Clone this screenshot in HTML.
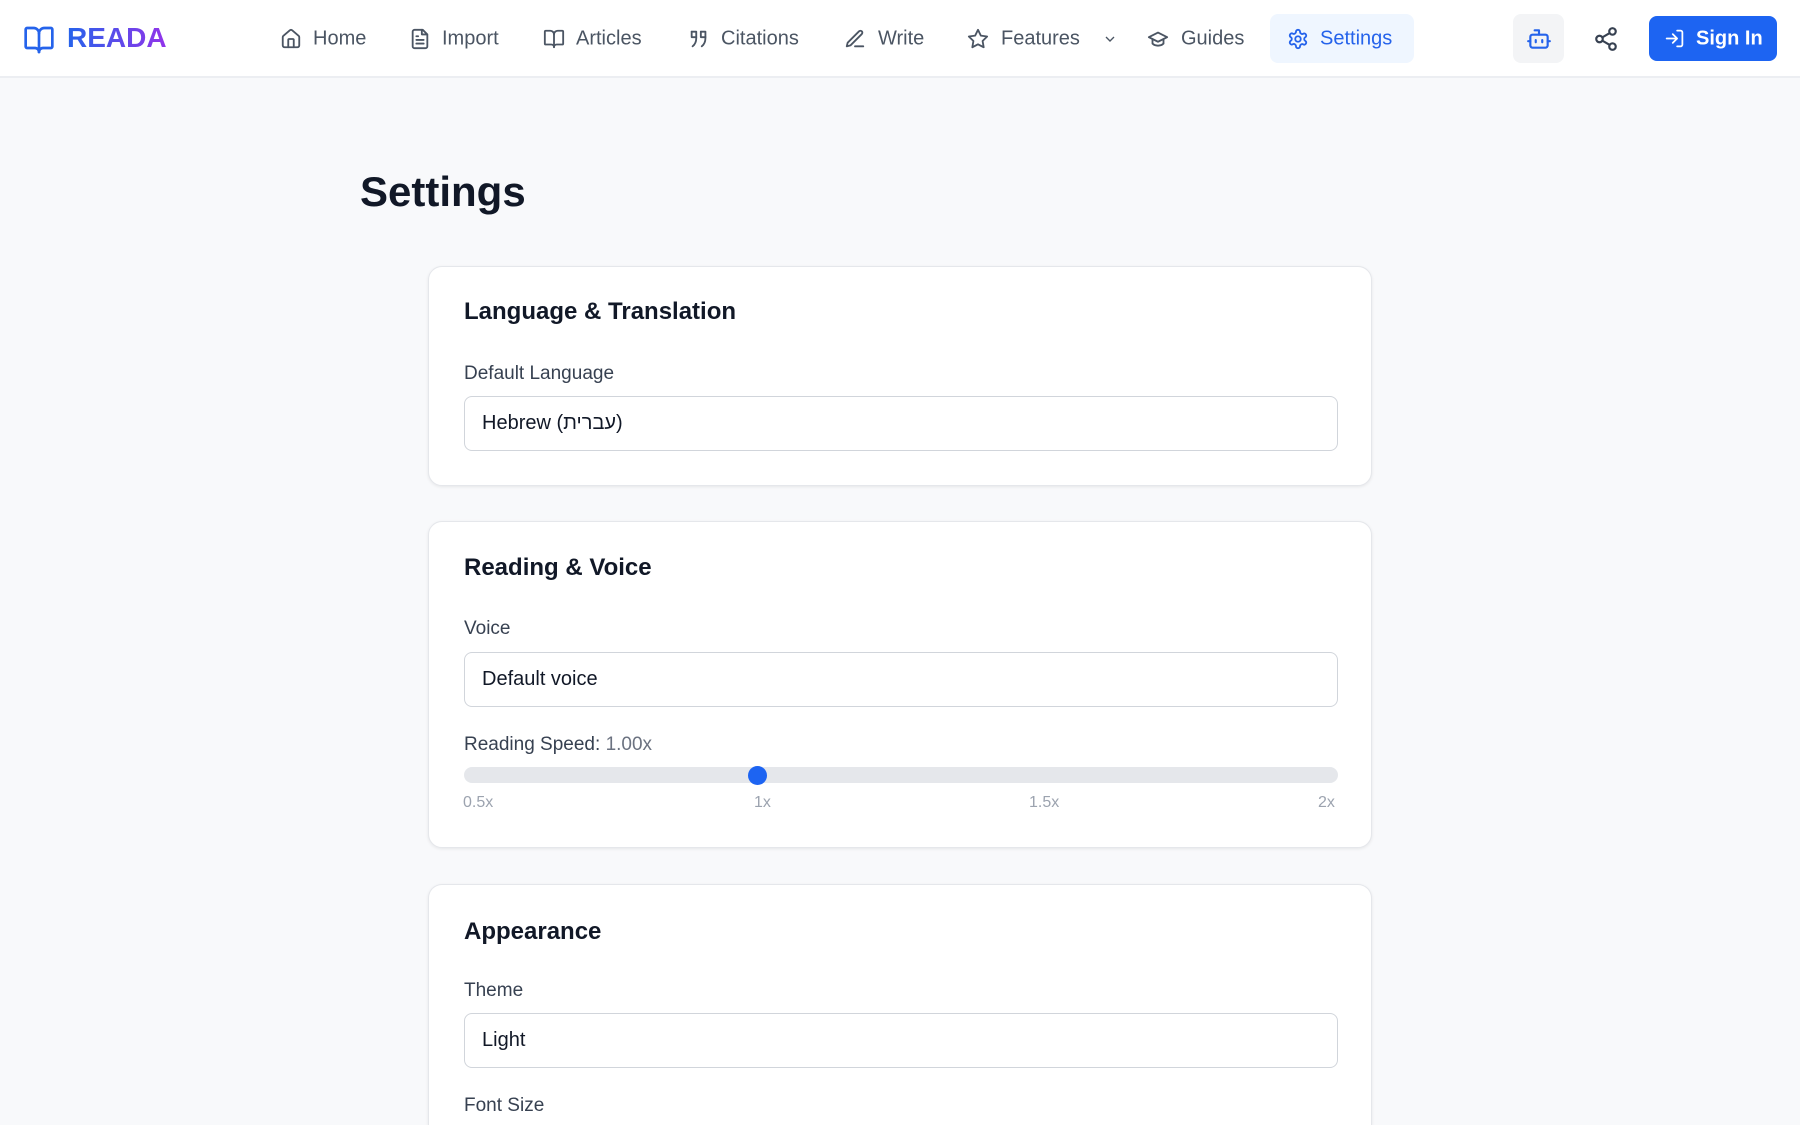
<!DOCTYPE html>
<html><head><meta charset="utf-8">
<style>
*{box-sizing:border-box;margin:0;padding:0}
html{width:1800px;height:1125px;overflow:hidden}
body{width:1800px;height:1125px;overflow:hidden;background:#f8f9fb;font-family:"Liberation Sans","Noto Sans CJK SC",sans-serif;color:#111827;position:relative}
.nav{position:absolute;left:0;top:0;width:1800px;height:78px;background:#fff;border-bottom:2px solid #eceef2}
.a{position:absolute}
.ni{position:absolute;top:39px;transform:translateY(-50%);font-size:20px;color:#4b5563;white-space:nowrap}
svg{position:absolute}
.card{position:absolute;left:428px;width:944px;background:#fff;border:1px solid #e5e7eb;border-radius:14px;box-shadow:0 1px 3px rgba(0,0,0,.08)}
.ct{position:absolute;left:35px;font-size:24px;font-weight:bold;color:#111827}
.lb{position:absolute;left:35px;font-size:19px;color:#374151}
.inp{position:absolute;left:35px;width:874px;height:55px;border:1.5px solid #d1d5db;border-radius:8px;font-size:20px;color:#111827;padding-left:17px;line-height:52px}
.tk{position:absolute;font-size:16px;color:#9ca3af;top:794px}
</style></head><body>
<div class="nav">
<svg style="left:23px;top:24px" width="32" height="32" viewBox="0 0 24 24" fill="none" stroke="#2563eb" stroke-width="2" stroke-linecap="round" stroke-linejoin="round"><path d="M12 7v14"/><path d="M3 18a1 1 0 0 1-1-1V4a1 1 0 0 1 1-1h5a4 4 0 0 1 4 4 4 4 0 0 1 4-4h5a1 1 0 0 1 1 1v13a1 1 0 0 1-1 1h-6a3 3 0 0 0-3 3 3 3 0 0 0-3-3z"/></svg>
<div class="a" style="left:67px;top:22px;font-size:28px;font-weight:bold;background:linear-gradient(90deg,#2563eb,#9333ea);-webkit-background-clip:text;color:transparent">READA</div>

<svg style="left:280px;top:28px" width="22" height="22" viewBox="0 0 24 24" fill="none" stroke="#4b5563" stroke-width="2" stroke-linecap="round" stroke-linejoin="round"><path d="M15 21v-8a1 1 0 0 0-1-1h-4a1 1 0 0 0-1 1v8"/><path d="M3 10a2 2 0 0 1 .7-1.5l7-6a2 2 0 0 1 2.6 0l7 6A2 2 0 0 1 21 10v9a2 2 0 0 1-2 2H5a2 2 0 0 1-2-2z"/></svg>
<div class="ni" style="left:313px">Home</div>
<svg style="left:409px;top:28px" width="22" height="22" viewBox="0 0 24 24" fill="none" stroke="#4b5563" stroke-width="2" stroke-linecap="round" stroke-linejoin="round"><path d="M15 2H6a2 2 0 0 0-2 2v16a2 2 0 0 0 2 2h12a2 2 0 0 0 2-2V7Z"/><path d="M14 2v5h5M16 13H8M16 17H8M10 9H8"/></svg>
<div class="ni" style="left:442px">Import</div>
<svg style="left:543px;top:28px" width="22" height="22" viewBox="0 0 24 24" fill="none" stroke="#4b5563" stroke-width="2" stroke-linecap="round" stroke-linejoin="round"><path d="M12 7v14"/><path d="M3 18a1 1 0 0 1-1-1V4a1 1 0 0 1 1-1h5a4 4 0 0 1 4 4 4 4 0 0 1 4-4h5a1 1 0 0 1 1 1v13a1 1 0 0 1-1 1h-6a3 3 0 0 0-3 3 3 3 0 0 0-3-3z"/></svg>
<div class="ni" style="left:576px">Articles</div>
<svg style="left:688px;top:28px" width="22" height="22" viewBox="0 0 24 24" fill="none" stroke="#4b5563" stroke-width="2" stroke-linecap="round" stroke-linejoin="round"><path d="M4 4h5v7c0 4-1.5 7-4 9"/><path d="M4 4v6h5"/><path d="M14 4h5v7c0 4-1.5 7-4 9"/><path d="M14 4v6h5"/></svg>
<div class="ni" style="left:721px">Citations</div>
<svg style="left:844px;top:28px" width="22" height="22" viewBox="0 0 24 24" fill="none" stroke="#4b5563" stroke-width="2" stroke-linecap="round" stroke-linejoin="round"><path d="M12 20h9"/><path d="M16.4 3.6a2.1 2.1 0 1 1 3 3L7 19l-4 1 1-4Z"/></svg>
<div class="ni" style="left:878px">Write</div>
<svg style="left:967px;top:28px" width="22" height="22" viewBox="0 0 24 24" fill="none" stroke="#4b5563" stroke-width="2" stroke-linejoin="round"><path d="M12 2l3.1 6.3 6.9 1-5 4.9 1.2 6.8L12 17.8 5.8 21l1.2-6.8-5-4.9 6.9-1z"/></svg>
<div class="ni" style="left:1001px">Features</div>
<svg style="left:1102px;top:31px" width="16" height="16" viewBox="0 0 24 24" fill="none" stroke="#4b5563" stroke-width="2"><path d="M6 9l6 6 6-6"/></svg>
<svg style="left:1147px;top:28px" width="22" height="22" viewBox="0 0 24 24" fill="none" stroke="#4b5563" stroke-width="2" stroke-linecap="round" stroke-linejoin="round"><path d="M22 10 12 5 2 10l10 5 10-5z"/><path d="M6 12v5c3 3 9 3 12 0v-5"/></svg>
<div class="ni" style="left:1181px">Guides</div>

<div class="a" style="left:1270px;top:14px;width:144px;height:49px;background:#eff6ff;border-radius:8px"></div>
<svg style="left:1287px;top:28px" width="22" height="22" viewBox="0 0 24 24" fill="none" stroke="#2563eb" stroke-width="2" stroke-linecap="round" stroke-linejoin="round"><path d="M12.2 2h-.4a2 2 0 0 0-2 2v.2a2 2 0 0 1-1 1.7l-.4.3a2 2 0 0 1-2 0l-.2-.1a2 2 0 0 0-2.7.7l-.2.4a2 2 0 0 0 .7 2.7l.2.1a2 2 0 0 1 1 1.7v.5a2 2 0 0 1-1 1.7l-.2.1a2 2 0 0 0-.7 2.7l.2.4a2 2 0 0 0 2.7.7l.2-.1a2 2 0 0 1 2 0l.4.3a2 2 0 0 1 1 1.7V20a2 2 0 0 0 2 2h.4a2 2 0 0 0 2-2v-.2a2 2 0 0 1 1-1.7l.4-.3a2 2 0 0 1 2 0l.2.1a2 2 0 0 0 2.7-.7l.2-.4a2 2 0 0 0-.7-2.7l-.2-.1a2 2 0 0 1-1-1.7v-.5a2 2 0 0 1 1-1.7l.2-.1a2 2 0 0 0 .7-2.7l-.2-.4a2 2 0 0 0-2.7-.7l-.2.1a2 2 0 0 1-2 0l-.4-.3a2 2 0 0 1-1-1.7V4a2 2 0 0 0-2-2z"/><circle cx="12" cy="12" r="3"/></svg>
<div class="ni" style="left:1320px;color:#2563eb">Settings</div>

<div class="a" style="left:1513px;top:14px;width:51px;height:49px;background:#f3f4f6;border-radius:8px"></div>
<svg style="left:1526px;top:26px" width="26" height="26" viewBox="0 0 24 24" fill="none" stroke="#2563eb" stroke-width="2" stroke-linecap="round" stroke-linejoin="round"><path d="M12 8V4H8"/><rect x="4" y="8" width="16" height="12" rx="2"/><path d="M2 14h2M20 14h2M15 13v2M9 13v2"/></svg>
<svg style="left:1593px;top:26px" width="26" height="26" viewBox="0 0 24 24" fill="none" stroke="#374151" stroke-width="2"><circle cx="18" cy="5" r="3"/><circle cx="6" cy="12" r="3"/><circle cx="18" cy="19" r="3"/><path d="M8.6 13.5l6.8 4M15.4 6.5l-6.8 4"/></svg>
<div class="a" style="left:1649px;top:16px;width:128px;height:45px;background:#1d64f2;border-radius:8px"></div>
<svg style="left:1664px;top:28px" width="21" height="21" viewBox="0 0 24 24" fill="none" stroke="#fff" stroke-width="2" stroke-linecap="round" stroke-linejoin="round"><path d="M15 3h4a2 2 0 0 1 2 2v14a2 2 0 0 1-2 2h-4M10 17l5-5-5-5M15 12H3"/></svg>
<div class="ni" style="left:1696px;color:#fff;font-weight:bold">Sign In</div>
</div>

<div class="a" style="left:360px;top:168px;font-size:42px;font-weight:bold;color:#111827">Settings</div>

<div class="card" style="top:266px;height:220px">
<div class="ct" style="top:31px">Language &amp; Translation</div>
<div class="lb" style="top:96px">Default Language</div>
<div class="inp" style="top:129px">Hebrew (עברית)</div>
</div>

<div class="card" style="top:521px;height:327px">
<div class="ct" style="top:32px">Reading &amp; Voice</div>
<div class="lb" style="top:96px">Voice</div>
<div class="inp" style="top:130px">Default voice</div>
<div class="lb" style="top:212px">Reading Speed: <span style="color:#6b7280">1.00x</span></div>
<div class="a" style="left:35px;top:245px;width:874px;height:16px;background:#e5e7eb;border-radius:8px"></div>
<div class="a" style="left:319px;top:244px;width:19px;height:19px;background:#1d64f2;border-radius:50%"></div>
</div>
<div class="tk" style="left:463px">0.5x</div>
<div class="tk" style="left:754px">1x</div>
<div class="tk" style="left:1029px">1.5x</div>
<div class="tk" style="left:1318px">2x</div>

<div class="card" style="top:884px;height:241px;border-bottom:none;border-radius:14px 14px 0 0">
<div class="ct" style="top:33px">Appearance</div>
<div class="lb" style="top:95px">Theme</div>
<div class="inp" style="top:128px">Light</div>
<div class="lb" style="top:210px">Font Size</div>
</div>
</body></html>
